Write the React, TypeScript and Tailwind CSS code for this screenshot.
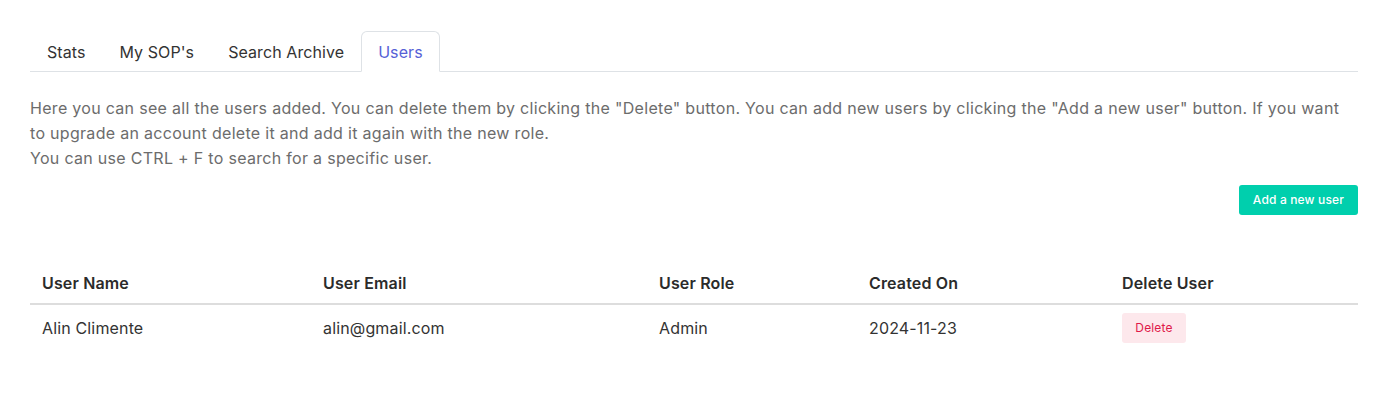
import React from "react";

const tabs = ["Stats", "My SOP's", "Search Archive", "Users"];

const users = [
  { name: "Alin Climente", email: "alin@gmail.com", role: "Admin", created: "2024-11-23" },
];

const App = () => {
  return (
    <div
      className="min-h-[409px] bg-white pl-[30px] pr-[34px] pt-[31px] text-[#333] tracking-[0.15px]"
      style={{ fontFamily: "Inter, 'Noto Sans', sans-serif" }}
    >
      <ul className="flex border-b border-[#dee2e6] tracking-[0.08px]">
        {tabs.map((t) => (
          <li key={t} className="-mb-px">
            <div
              className={`px-4 h-[41px] flex items-center text-[16px] rounded-t-[6px] border ${
                t === "Users"
                  ? "border-[#dee2e6] border-b-white bg-white text-[#5661d6]"
                  : "border-transparent text-[#333]"
              }`}
            >
              {t}
            </div>
          </li>
        ))}
      </ul>

      <div className="mt-[24px] text-[16px] leading-[25px] text-[#6c6c6c] tracking-[0.3px]">
        <p>
          Here you can see all the users added. You can delete them by clicking the "Delete" button. You can add
          new users by clicking the "Add a new user" button. If you want to upgrade an account delete it and add it
          again with the new role.
        </p>
        <p>You can use CTRL + F to search for a specific user.</p>
      </div>

      <div className="flex justify-end mt-[14px]">
        <button className="h-[30px] px-[14px] rounded-[3px] bg-[#00cfad] text-white text-[12px] font-medium">
          Add a new user
        </button>
      </div>

      <table className="w-full mt-[47px] border-collapse text-[16px]">
        <thead>
          <tr className="border-b-2 border-[#dddddd]">
            <th className="w-[281px] px-3 h-[42px] text-left font-semibold text-[#2b2b2b]">User Name</th>
            <th className="w-[336px] px-3 text-left font-semibold text-[#2b2b2b]">User Email</th>
            <th className="w-[210px] px-3 text-left font-semibold text-[#2b2b2b]">User Role</th>
            <th className="w-[253px] px-3 text-left font-semibold text-[#2b2b2b]">Created On</th>
            <th className="px-3 text-left font-semibold text-[#2b2b2b]">Delete User</th>
          </tr>
        </thead>
        <tbody>
          {users.map((u) => (
            <tr key={u.email}>
              <td className="px-3 h-[46px]">{u.name}</td>
              <td className="px-3">{u.email}</td>
              <td className="px-3">{u.role}</td>
              <td className="px-3">{u.created}</td>
              <td className="px-3">
                <button className="h-[30px] w-[64px] rounded-[3px] bg-[#fde8ec] text-[#e0194a] text-[12px]">
                  Delete
                </button>
              </td>
            </tr>
          ))}
        </tbody>
      </table>
    </div>
  );
};

export default App;
